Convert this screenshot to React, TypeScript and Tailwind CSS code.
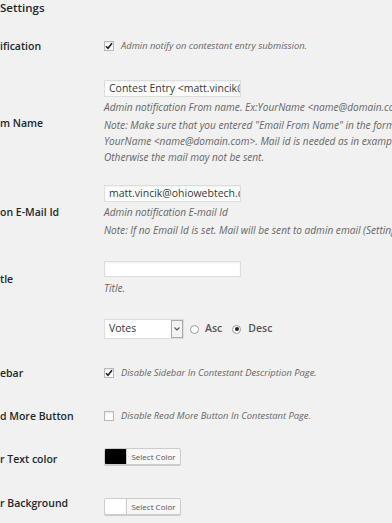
import React from "react";

const Label = ({ children }: { children: React.ReactNode }) => (
  <div className="w-[104px] shrink-0 whitespace-nowrap text-[10.5px] font-semibold leading-[16px] text-[#23282d]">
    {children}
  </div>
);

const Desc = ({ children, className = "" }: { children: React.ReactNode; className?: string }) => (
  <div className={"whitespace-nowrap text-[10.1px] italic leading-[16px] text-[#666] " + className}>{children}</div>
);

const CheckText = ({ children }: { children: React.ReactNode }) => (
  <div className="whitespace-nowrap text-[9.35px] italic leading-[16px] text-[#666]">{children}</div>
);

const Check = ({ checked }: { checked?: boolean }) => (
  <div className="flex h-[10px] w-[10px] shrink-0 items-center justify-center border border-[#b4b9be] bg-white shadow-[inset_0_1px_2px_rgba(0,0,0,0.1)]">
    {checked && (
      <svg width="8" height="8" viewBox="0 0 8 8">
        <path d="M1 4.2 L3 6.3 L7 1.2" fill="none" stroke="#222" strokeWidth="1.6" />
      </svg>
    )}
  </div>
);

const TextBox = ({ value, h = "h-[17px]" }: { value?: string; h?: string }) => (
  <div
    className={
      "flex w-[137px] items-center overflow-hidden whitespace-nowrap border border-[#ddd] bg-white pl-[4px] text-[10.5px] text-[#32373c] shadow-[inset_0_1px_2px_rgba(0,0,0,0.07)] " +
      h
    }
  >
    {value}
  </div>
);

const Radio = ({ checked }: { checked?: boolean }) => (
  <div className="flex h-[9px] w-[9px] items-center justify-center rounded-full border border-[#999] bg-white">
    {checked && <div className="h-[4px] w-[4px] rounded-full bg-[#222]" />}
  </div>
);

const ColorBtn = ({ color }: { color: string }) => (
  <div className="flex h-[17px] w-[77px] items-stretch overflow-hidden rounded-[2px] border border-[#ccc] bg-[#f7f7f7] shadow-[0_1px_0_#ccc]">
    <div className="w-[22px] border-r border-[#ccc]" style={{ backgroundColor: color }} />
    <div className="flex flex-1 items-center justify-center text-[8px] text-[#555]">Select Color</div>
  </div>
);

export default function App() {
  return (
    <div className="h-[523px] w-[392px] overflow-hidden bg-[#f1f1f1] font-['Open_Sans',sans-serif]">
      <div className="h-[16px] whitespace-nowrap text-[11.5px] font-semibold leading-[16px] text-[#23282d]">Settings</div>

      {/* Notification */}
      <div className="mt-[21px] flex h-[18px] items-center">
        <Label>ification</Label>
        <div className="flex items-center gap-[7px]">
          <Check checked />
          <CheckText>Admin notify on contestant entry submission.</CheckText>
        </div>
      </div>

      {/* From Name */}
      <div className="mt-[25px] flex items-center">
        <Label>m Name</Label>
        <div className="flex flex-col">
          <TextBox value="Contest Entry <matt.vincik@ohiowebtech.com>" />
          <Desc className="mt-[2px]">Admin notification From name. Ex:YourName &lt;name@domain.com&gt;</Desc>
          <div className="mt-[2px]">
            <Desc>Note: Make sure that you entered "Email From Name" in the format</Desc>
            <Desc>YourName &lt;name@domain.com&gt;. Mail id is needed as in example.</Desc>
            <Desc>Otherwise the mail may not be sent.</Desc>
          </div>
        </div>
      </div>

      {/* E-Mail Id */}
      <div className="mt-[20px] flex items-center">
        <Label>on E-Mail Id</Label>
        <div className="flex flex-col">
          <TextBox value="matt.vincik@ohiowebtech.com" />
          <Desc className="mt-[2px]">Admin notification E-mail Id</Desc>
          <Desc className="mt-[2px]">Note: If no Email Id is set. Mail will be sent to admin email (Settings &gt; General)</Desc>
        </div>
      </div>

      {/* Title */}
      <div className="mt-[23px] flex items-center">
        <Label>tle</Label>
        <div className="flex flex-col">
          <TextBox h="h-[16px]" />
          <Desc className="mt-[3px]">Title.</Desc>
        </div>
      </div>

      {/* Sort */}
      <div className="mt-[23px] flex items-center">
        <Label>&nbsp;</Label>
        <div className="flex items-center">
          <div className="flex h-[20px] w-[80px] items-stretch border border-[#ddd] bg-white">
            <div className="flex flex-1 items-center pl-[4px] text-[10.5px] text-[#32373c]">Votes</div>
            <div className="flex w-[12px] items-center justify-center border border-[#aaa] bg-[#f3f3f3]">
              <svg width="6" height="4" viewBox="0 0 6 4">
                <path d="M0.5 0.5 L3 3 L5.5 0.5" fill="none" stroke="#555" strokeWidth="1.1" />
              </svg>
            </div>
          </div>
          <div className="ml-[6px] flex items-center">
            <Radio />
            <span className="ml-[6px] text-[10.5px] font-semibold text-[#555]">Asc</span>
          </div>
          <div className="ml-[10px] flex items-center">
            <Radio checked />
            <span className="ml-[7px] text-[10.5px] font-semibold text-[#555]">Desc</span>
          </div>
        </div>
      </div>

      {/* Sidebar */}
      <div className="mt-[25px] flex h-[18px] items-center">
        <Label>ebar</Label>
        <div className="flex items-center gap-[7px]">
          <Check checked />
          <CheckText>Disable Sidebar In Contestant Description Page.</CheckText>
        </div>
      </div>

      {/* Read More */}
      <div className="mt-[25px] flex h-[18px] items-center">
        <Label>d More Button</Label>
        <div className="flex items-center gap-[7px]">
          <Check />
          <CheckText>Disable Read More Button In Contestant Page.</CheckText>
        </div>
      </div>

      {/* Text color */}
      <div className="mt-[23px] flex items-center">
        <Label>
          <span className="relative top-[2px]">r Text color</span>
        </Label>
        <ColorBtn color="#000000" />
      </div>

      {/* Background */}
      <div className="mt-[33px] flex items-center">
        <Label>
          <span className="relative -top-[4px]">r Background</span>
        </Label>
        <ColorBtn color="#ffffff" />
      </div>
    </div>
  );
}
